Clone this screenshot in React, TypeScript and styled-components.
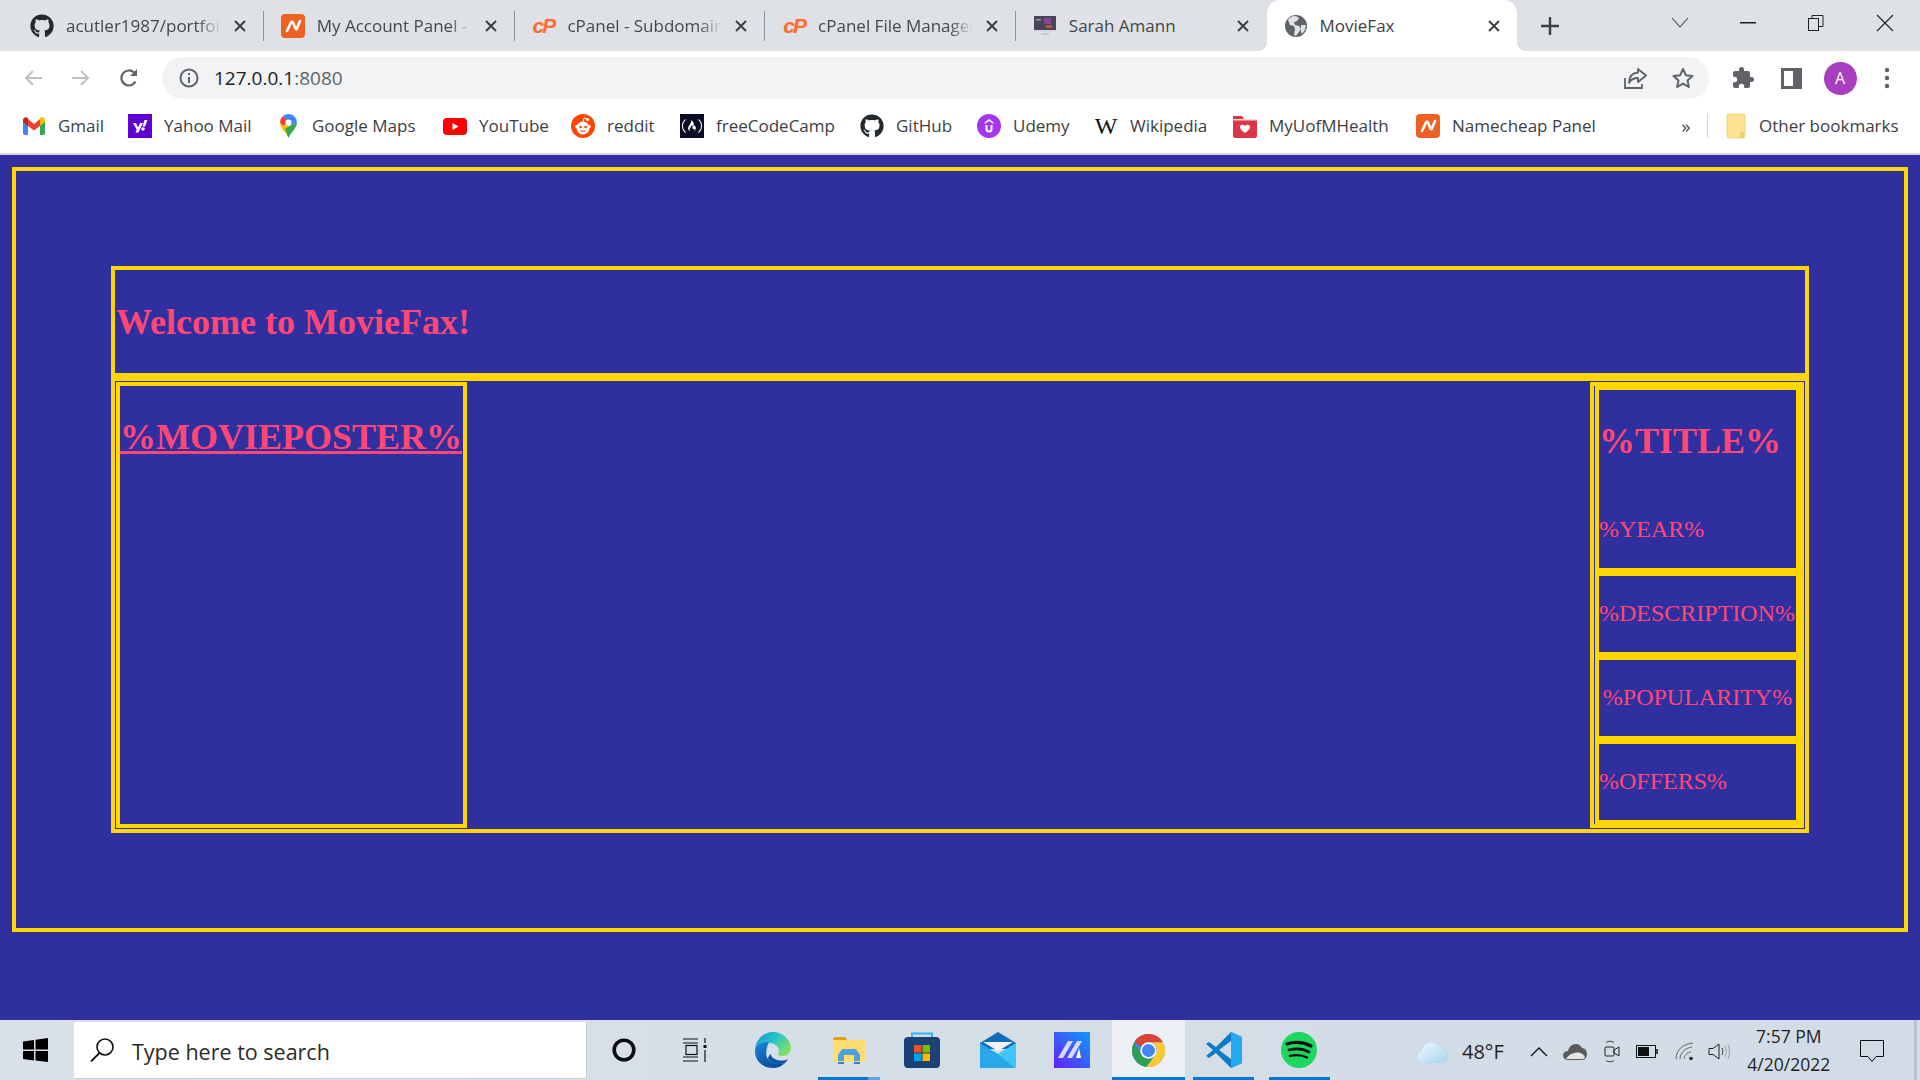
import React from "react";
import styled, { createGlobalStyle } from "styled-components";
import { FaGithub } from "react-icons/fa";
import { SiFreecodecamp } from "react-icons/si";

const UI = `"Open Sans", "Noto Sans", "Liberation Sans", sans-serif`;
const GOLD = "#FFD700";
const PINK = "#FF4775";
const NAVY = "#2F2FA0";

const Global = createGlobalStyle`
  html, body { margin: 0; padding: 0; background: ${NAVY}; }
  * { box-sizing: border-box; }
`;

const Screen = styled.div`
  width: 1920px;
  height: 1080px;
  display: flex;
  flex-direction: column;
  overflow: hidden;
  font-family: ${UI};
`;

/* ---------- browser chrome ---------- */
const TabStrip = styled.div`
  height: 51px;
  flex: none;
  background: #dee1e6;
  display: flex;
  align-items: center;
  padding-left: 13px;
`;
const Tab = styled.div<{ $active?: boolean }>`
  position: relative;
  flex: 0 0 250px;
  min-width: 0;
  align-self: stretch;
  display: flex;
  align-items: center;
  padding: 1px 16px 0 17px;
  background: ${(p) => (p.$active ? "#fff" : "transparent")};
  border-radius: ${(p) => (p.$active ? "13px 13px 0 0" : "0")};
  color: ${(p) => (p.$active ? "#3c4043" : "#45474a")};
  ${(p) =>
    p.$active
      ? `&::before, &::after { content: ""; position: absolute; bottom: 0; width: 10px; height: 10px; }
         &::before { left: -10px; background: radial-gradient(circle at 0 0, transparent 10px, #fff 10.5px); }
         &::after { right: -10px; background: radial-gradient(circle at 100% 0, transparent 10px, #fff 10.5px); }`
      : ""}
`;
const TabIconBox = styled.span`
  flex: 0 0 24px;
  height: 24px;
  display: flex;
  align-items: center;
  justify-content: center;
`;
const TabTitle = styled.span<{ $fade: boolean }>`
  flex: 1;
  min-width: 0;
  margin: 0 12px;
  font-size: 17px;
  line-height: 24px;
  white-space: nowrap;
  overflow: hidden;
  ${(p) =>
    p.$fade
      ? `-webkit-mask-image: linear-gradient(to right, #000 85%, transparent 100%);
         mask-image: linear-gradient(to right, #000 85%, transparent 100%);`
      : ""}
`;
const TabSep = styled.span<{ $hidden: boolean }>`
  flex: 0 0 1px;
  height: 30px;
  margin-right: -0.3px;
  background: ${(p) => (p.$hidden ? "transparent" : "#8f9297")};
`;
const NewTab = styled.span`
  margin-left: 23px;
  display: flex;
`;
const StripRight = styled.div`
  margin-left: auto;
  display: flex;
  align-items: center;
`;
const WinButton = styled.span`
  width: 68px;
  height: 51px;
  display: flex;
  align-items: center;
  justify-content: center;
  padding-bottom: 6px;
  &:last-child { width: 70px; }
`;

const Toolbar = styled.div`
  height: 52px;
  flex: none;
  background: #fff;
  display: flex;
  align-items: center;
  padding: 2px 0 0 9px;
`;
const NavButton = styled.span`
  width: 48px;
  height: 42px;
  display: flex;
  align-items: center;
  justify-content: center;
`;
const Omnibox = styled.div`
  margin-left: 9px;
  width: 1547px;
  height: 42px;
  border-radius: 21px;
  background: #f1f3f4;
  display: flex;
  align-items: center;
  padding-left: 17px;
`;
const Url = styled.span`
  margin-left: 15px;
  font-size: 19px;
  color: #202124;
  flex: 1;
`;
const UrlPort = styled.span`
  color: #5f6368;
`;
const OmniAction = styled.span`
  width: 47px;
  display: flex;
  justify-content: center;
  &:last-child { margin-right: 3px; }
`;
const ToolGroup = styled.div`
  margin-left: 10px;
  display: flex;
  align-items: center;
`;

const BookmarkBar = styled.div`
  height: 52px;
  flex: none;
  background: #fff;
  border-bottom: 2px solid #d6d6d6;
  display: flex;
  align-items: center;
  padding: 0 0 4px 22px;
`;
const Bookmark = styled.div<{ $w: number }>`
  flex: 0 0 ${(p) => p.$w}px;
  display: flex;
  align-items: center;
`;
const BmIcon = styled.span`
  flex: 0 0 24px;
  height: 24px;
  display: flex;
  align-items: center;
  justify-content: center;
`;
const BmText = styled.span`
  margin-left: 12px;
  font-size: 17px;
  line-height: 24px;
  color: #3c4043;
  white-space: nowrap;
`;
const WikiW = styled.span`
  font-family: "Liberation Serif", serif;
  font-size: 24px;
  line-height: 24px;
  color: #111;
`;
const Chevrons = styled.span`
  flex: 0 0 32px;
  text-align: center;
  font-size: 18px;
  line-height: 24px;
  color: #45474a;
`;
const BmDivider = styled.span`
  flex: 0 0 1px;
  height: 24px;
  margin: 0 18px 0 5px;
  background: #d3d4d6;
`;
const OtherText = styled(BmText)`
  margin-left: 13px;
`;

/* ---------- the page ---------- */
const Page = styled.main`
  flex: 1;
  min-height: 0;
  background: ${NAVY};
  padding: 12px;
`;
const Frame = styled.div`
  height: 765px;
  border: 4px solid ${GOLD};
  padding: 95px 95px 0;
  font-family: "Liberation Serif", "Times New Roman", serif;
  color: ${PINK};
`;
const Header = styled.header`
  height: 111px;
  border: 4px solid ${GOLD};
  display: flex;
  align-items: center;
  padding-left: 1px;
`;
const Welcome = styled.h1`
  margin: 0;
  font-size: 36px;
  font-weight: 700;
`;
const Row = styled.section`
  height: 456px;
  border: 4px solid ${GOLD};
  padding: 1px;
  display: flex;
  justify-content: space-between;
`;
const Poster = styled.div`
  width: 351px;
  border: 4px solid ${GOLD};
  padding-top: 30px;
`;
const PosterLink = styled.a`
  display: block;
  font-size: 36px;
  font-weight: 700;
  color: ${PINK};
  text-decoration: underline;
  white-space: nowrap;
`;
const Details = styled.div`
  width: 214px;
  border: 4px solid ${GOLD};
  padding-left: 1px;
  display: flex;
  flex-direction: column;
`;
const TitleBox = styled.div`
  height: 186px;
  border: 4px solid ${GOLD};
  padding-top: 30px;
`;
const MovieTitle = styled.h2`
  margin: 0 0 54px;
  font-size: 36px;
  font-weight: 700;
`;
const FactText = styled.div`
  font-size: 24px;
  white-space: nowrap;
`;
const FactBox = styled.div<{ $center?: boolean }>`
  height: 84px;
  border: 4px solid ${GOLD};
  padding-bottom: 2px;
  display: flex;
  align-items: center;
  justify-content: ${(p) => (p.$center ? "center" : "flex-start")};
`;

/* ---------- taskbar ---------- */
const Taskbar = styled.footer`
  height: 60px;
  flex: none;
  background: linear-gradient(90deg, #d9e0e8, #d2dce6);
  display: flex;
`;
const StartButton = styled.span`
  flex: 0 0 74px;
  display: flex;
  align-items: center;
  justify-content: center;
  padding: 0 3px 0 0;
`;
const SearchBox = styled.div`
  flex: 0 0 512px;
  height: 56px;
  margin-top: 2px;
  background: #fff;
  display: flex;
  align-items: center;
  padding-left: 16px;
  box-shadow: 1px 1px 0 #c9ced4;
`;
const SearchText = styled.span`
  margin: 2px 0 0 17px;
  font-size: 21.5px;
  color: #2a2a2a;
`;
const AppSlot = styled.div<{ $w: number; $on?: boolean }>`
  flex: 0 0 ${(p) => p.$w}px;
  display: flex;
  flex-direction: column;
  align-items: center;
  background: ${(p) => (p.$on ? "#edf0f4" : "transparent")};
`;
const AppIcon = styled.div`
  flex: 1;
  display: flex;
  align-items: center;
  justify-content: center;
  padding-top: 3px;
`;
const Underline = styled.span<{ $w: number; $split?: boolean }>`
  flex: 0 0 3px;
  width: ${(p) => p.$w}px;
  background: ${(p) => (p.$split ? "linear-gradient(90deg,#0078d4 80%,#5ca5e3 80%)" : "#0078d4")};
`;
const NoUnderline = styled.span`
  flex: 0 0 3px;
`;
const TrayItem = styled.div<{ $ml: number }>`
  margin-left: ${(p) => p.$ml}px;
  display: flex;
  align-items: center;
  justify-content: center;
  padding-top: 2px;
`;
const Temp = styled.span`
  font-size: 20px;
  color: #1f1f1f;
`;
const Clock = styled.div`
  margin-left: 17px;
  width: 84px;
  padding-top: 2px;
  display: flex;
  flex-direction: column;
  align-items: center;
  font-size: 17.5px;
  line-height: 28px;
  color: #1f1f1f;
  white-space: nowrap;
`;
const EdgeLine = styled.span`
  flex: 0 0 3px;
  margin-left: 30px;
  background: #b9c2cc;
`;

/* ---------- drawings ---------- */
const S = ({ w, h = w, vb, children }: { w: number; h?: number; vb?: string; children: React.ReactNode }) => (
  <svg width={w} height={h} viewBox={vb ?? `0 0 ${w} ${h}`} fill="none" style={{ display: "block" }}>
    {children}
  </svg>
);
const CloseX = () => (
  <S w={14}><path d="M2 2 12 12M12 2 2 12" stroke="#3c4043" strokeWidth="2" /></S>
);
const Namecheap = ({ w = 24, h = 24 }: { w?: number; h?: number }) => (
  <S w={w} h={h} vb="0 0 24 24">
    <rect width="24" height="24" rx="4" fill="#ED6223" />
    <path d="M6 17 10 8.500c.6-1 1.600-1 2 0l2.500 6c.3 1 1 1 1.400 0L19 7" stroke="#fff" strokeWidth="2.600" strokeLinecap="round" />
  </S>
);
const CPanelMark = styled.span`
  font-family: "Liberation Sans", sans-serif;
  font-style: italic;
  font-weight: 700;
  font-size: 21px;
  letter-spacing: -2px;
  line-height: 24px;
  color: #ff6c2c;
`;
const Monitor = () => (
  <S w={22} h={20}>
    <rect x="0" y="0" width="22" height="14" fill="#4a4458" />
    <rect x="10" y="2" width="7" height="6" fill="#7d4a9e" />
    <rect x="12" y="9" width="6" height="3" fill="#c0553c" />
    <rect x="2" y="3" width="5" height="1.500" fill="#9a96a8" />
    <rect x="0" y="14" width="22" height="2" fill="#d9d9dd" />
    <rect x="7" y="17" width="8" height="2" fill="#c6c6cb" />
  </S>
);
const Globe = () => (
  <S w={22}>
    <circle cx="11" cy="11" r="11" fill="#5f6368" />
    <path d="M9 1c-3 .5-5 2-6 4l2 5 4 1 1 3-1 6 2 1 3-4 2-3-2-3-4-1-1-3 3-1 2-3-2-1.500Z" fill="#dee1e6" />
    <path d="M16 10h5l-1 5-3 4-1-2Z" fill="#dee1e6" />
  </S>
);
const Gmail = () => (
  <S w={22} h={18} vb="0 0 22 18">
    <path d="M0 3v13c0 1 .7 2 2 2h3V8Z" fill="#4285F4" />
    <path d="M22 3v13c0 1-.7 2-2 2h-3V8Z" fill="#34A853" />
    <path d="M5 9V2l6 5 6-5v7l-6 4.500Z" fill="#EA4335" />
    <path d="M0 3c0-2.500 3-3.700 5-2v8L0 5Z" fill="#C5221F" />
    <path d="M22 3c0-2.500-3-3.700-5-2v8l5-4Z" fill="#FBBC04" />
  </S>
);
const Yahoo = () => (
  <S w={24}>
    <rect width="24" height="24" fill="#5F01D1" />
    <path d="M5 9h3l2 4.500L12 9h3l-4.500 9.500H7.500l1.200-3Z" fill="#fff" />
    <path d="M16.500 6h3l-2.500 6.500h-2.500Z" fill="#fff" />
    <circle cx="15" cy="15" r="1.800" fill="#fff" />
  </S>
);
const Maps = () => (
  <S w={17} h={24} vb="0 0 17 24">
    <path d="M14 2a8.500 8.500 0 0 1 3 6.500L11 11 6 6Z" fill="#4285F4" />
    <path d="M3 2A8.500 8.500 0 0 1 8.500 0c2 0 4 .7 5.500 2L8.500 8.500 6 6Z" fill="#4285F4" />
    <path d="M0 8.500A8.500 8.500 0 0 1 3 2l5.500 6.500L3 12Z" fill="#EA4335" />
    <path d="M3 12 8.500 8.500V24C7 19 0 14.500 0 8.500Z" fill="#FBBC04" />
    <path d="M8.500 24 5 15l6-4 6-2.500C17 14.500 10 19 8.500 24Z" fill="#34A853" />
    <circle cx="8.500" cy="8.500" r="3" fill="#fff" />
  </S>
);
const YouTube = () => (
  <S w={24} h={17} vb="0 0 24 17">
    <rect width="24" height="17" rx="4" fill="#FF0000" />
    <path d="M9.500 5v7l6-3.500Z" fill="#fff" />
  </S>
);
const Reddit = () => (
  <S w={24}>
    <circle cx="12" cy="12" r="12" fill="#FF4500" />
    <circle cx="12" cy="14" r="6.500" fill="#fff" />
    <circle cx="6" cy="12.500" r="1.800" fill="#fff" />
    <circle cx="18" cy="12.500" r="1.800" fill="#fff" />
    <circle cx="16.500" cy="5.500" r="1.600" fill="#fff" />
    <path d="M12 8l1-4 3.500 1" stroke="#fff" strokeWidth="1" />
    <circle cx="9.500" cy="13" r="1.300" fill="#FF4500" />
    <circle cx="14.500" cy="13" r="1.300" fill="#FF4500" />
    <path d="M9 16.500c1.500 1.300 4.500 1.300 6 0" stroke="#FF4500" strokeWidth="1" />
  </S>
);
const FreeCode = () => (
  <S w={24}>
    <rect width="24" height="24" fill="#0A0A23" />
    <foreignObject x="2" y="2" width="20" height="20"><SiFreecodecamp size={20} color="#fff" /></foreignObject>
  </S>
);
const Udemy = () => (
  <S w={24}>
    <circle cx="12" cy="12" r="12" fill="#A435F0" />
    <path d="M7.500 8.500 12 5l4.500 3.500v1.500L12 7 7.500 10Z" fill="#fff" />
    <path d="M8.500 11v4a3.500 3.500 0 0 0 7 0v-4h-2v4a1.500 1.500 0 0 1-3 0v-4Z" fill="#fff" />
  </S>
);
const MyU = () => (
  <S w={24}>
    <path d="M0 2h9l2 3h13v17c0 1-1 2-2 2H2c-1 0-2-1-2-2Z" fill="#DC3545" />
    <rect x="0" y="5" width="24" height="1.500" fill="#fff" opacity=".8" />
    <path d="M12 19c-3-2-5-4-5-6 0-2.500 3.500-3 5-1 1.500-2 5-1.500 5 1 0 2-2 4-5 6Z" fill="#fff" />
  </S>
);
const Folder = () => (
  <S w={20} h={26}>
    <rect x="1" y="1" width="18" height="24" rx="2" fill="#FDE293" stroke="#f3d472" />
    <rect x="14" y="19" width="4" height="6" fill="#f3d06a" />
  </S>
);
const Gray = "#5f6368";
const Back = ({ c = "#bdc1c6" }: { c?: string }) => (
  <S w={20}><path d="M19 10H3M10 3l-7 7 7 7" stroke={c} strokeWidth="2" /></S>
);
const Forward = () => (
  <S w={20}><path d="M1 10h16M10 3l7 7-7 7" stroke="#bdc1c6" strokeWidth="2" /></S>
);
const Reload = () => (
  <S w={20}>
    <path d="M16.500 13.500A7.500 7.500 0 1 1 15 4.500" stroke={Gray} strokeWidth="2.200" />
    <path d="M18 1v7h-7Z" fill={Gray} />
  </S>
);
const Info = () => (
  <S w={20}>
    <circle cx="10" cy="10" r="8.500" stroke={Gray} strokeWidth="2" />
    <path d="M10 9v6M10 5v2" stroke={Gray} strokeWidth="2" />
  </S>
);
const Share = () => (
  <S w={23}>
    <path d="M1 11v10h17v-4" stroke={Gray} strokeWidth="1.800" />
    <path d="M14 2l8 6.500-8 6.500v-4c-4 0-7 1-9 5 0-6 3-10 9-10.500Z" stroke={Gray} strokeWidth="1.800" strokeLinejoin="round" />
  </S>
);
const Star = () => (
  <S w={22}>
    <path d="M11 2l2.800 6.200 6.700.7-5 4.500 1.400 6.600L11 16.600 5.100 20l1.400-6.600-5-4.500 6.700-.7Z" stroke={Gray} strokeWidth="2" strokeLinejoin="round" />
  </S>
);
const Puzzle = () => (
  <S w={24} vb="0 0 24 24">
    <path d="M20.500 11H19V7c0-1.100-.9-2-2-2h-4V3.500a2.500 2.500 0 0 0-5 0V5H4c-1.100 0-2 .9-2 2v3.800h1.500a2.700 2.700 0 0 1 0 5.400H2V20c0 1.100.9 2 2 2h3.800v-1.500a2.700 2.700 0 0 1 5.400 0V22H17c1.100 0 2-.9 2-2v-4h1.500a2.500 2.500 0 0 0 0-5Z" fill={Gray} />
  </S>
);
const SidePanel = () => (
  <S w={21}>
    <rect x="1.500" y="1.500" width="18" height="18" stroke={Gray} strokeWidth="3" />
    <rect x="12" y="2" width="7" height="17" fill={Gray} />
  </S>
);
const AvatarCircle = styled.span`
  width: 33px;
  height: 33px;
  border-radius: 50%;
  background: #a83ec0;
  color: #fff;
  font-size: 16px;
  display: flex;
  align-items: center;
  justify-content: center;
`;
const ToolSlot = styled.span<{ $w: number }>`
  flex: 0 0 ${(p) => p.$w}px;
  display: flex;
  justify-content: center;
  align-items: center;
`;
const Kebab = () => (
  <S w={6} h={22}>
    <circle cx="3" cy="3" r="2.200" fill={Gray} /><circle cx="3" cy="11" r="2.200" fill={Gray} /><circle cx="3" cy="19" r="2.200" fill={Gray} />
  </S>
);
const WinLogo = () => (
  <S w={25} h={24}>
    <path d="M0 3.500 11 2v9.500H0ZM12.500 1.800 25 0v11.500H12.500ZM0 13h11v9.500L0 21ZM12.500 13H25v11l-12.500-1.500Z" fill="#000" />
  </S>
);
const Magnifier = () => (
  <S w={25} h={24}>
    <circle cx="15" cy="9" r="8" stroke="#111" strokeWidth="1.600" />
    <path d="M9.500 15 1 23.500" stroke="#111" strokeWidth="1.800" />
  </S>
);
const Cortana = () => (
  <S w={24}><circle cx="12" cy="12" r="9.800" stroke="#0c0c0c" strokeWidth="3.600" /></S>
);
const TaskView = () => (
  <S w={25} h={24}>
    <path d="M0 1h15M0 5h15M0 19h15M0 23h15" stroke="#111" strokeWidth="1.200" />
    <rect x="3" y="7.500" width="11" height="9" stroke="#111" strokeWidth="1.200" />
    <path d="M22 0v5M22 12v12" stroke="#111" strokeWidth="1.200" />
    <rect x="20.500" y="7" width="3" height="3" fill="#111" />
  </S>
);
const Edge = () => (
  <S w={36} vb="0 0 36 36">
    <defs>
      <linearGradient id="eg1" x1="0" y1="0" x2="1" y2="0.6"><stop offset="0" stopColor="#0c8fd8" /><stop offset=".55" stopColor="#2ec6c6" /><stop offset="1" stopColor="#7fe06a" /></linearGradient>
      <linearGradient id="eg2" x1="0" y1="0" x2="0.5" y2="1"><stop offset="0" stopColor="#1c86d8" /><stop offset="1" stopColor="#0a4ea0" /></linearGradient>
    </defs>
    <path d="M0 17C1 7 9 0 18 0c10 0 18 8 18 16 0 5-4 8-8 8-3 0-5-1-5-2 1-1 1-2 1-3 0-4-4-8-10-8C8 11 2 13 0 17Z" fill="url(#eg1)" />
    <path d="M14 10C6 10 0 14 0 19c0 10 8 17 18 17 5 0 9-2 12-5-6 2-14 1-17-4-3-4-2-10 1-17Z" fill="url(#eg2)" />
    <path d="M13 27c4 6 12 6 17 4 1-1 2-2 3-4-4 2-9 2-13 0-3-1-4-3-4-5-2 1-3 3-3 5Z" fill="#0b57a8" />
  </S>
);
const Explorer = () => (
  <S w={32} h={27}>
    <path d="M0 2c0-1 1-2 2-2h10l3 4H0Z" fill="#E0A30F" />
    <rect x="0" y="3" width="32" height="22" rx="1" fill="#FFDC6E" />
    <path d="M5 24v-6l4-6h14l4 6v6h-6v-6h-10v6Z" fill="#4FA0E0" />
    <path d="M5 25v2h6v-2ZM21 25v2h6v-2Z" fill="#3a7fc0" />
  </S>
);
const Store = () => (
  <S w={36}>
    <path d="M8 6V1.500h20V6" stroke="#2FB6EE" strokeWidth="2" />
    <rect x="0" y="5" width="36" height="31" rx="4" fill="#1A4277" />
    <rect x="10" y="13" width="7.500" height="7.500" fill="#F25022" />
    <rect x="18.500" y="13" width="7.500" height="7.500" fill="#7FBA00" />
    <rect x="10" y="21.500" width="7.500" height="7.500" fill="#00A4EF" />
    <rect x="18.500" y="21.500" width="7.500" height="7.500" fill="#FFB900" />
  </S>
);
const Mail = () => (
  <S w={36}>
    <path d="M0 11 18 0l18 11v6H0Z" fill="#0F6CBD" />
    <path d="M3 10h30L18 19Z" fill="#f2f2f2" />
    <path d="M0 11l18 11 18-11v24a1 1 0 0 1-1 1H1a1 1 0 0 1-1-1Z" fill="#28A8EA" />
    <path d="M18 22l18-11v24a1 1 0 0 1-1 1Z" fill="#50D9FF" opacity=".6" />
  </S>
);
const MArk = () => (
  <S w={36}>
    <defs>
      <linearGradient id="mk" x1="0" y1="1" x2="1" y2="0"><stop offset="0" stopColor="#6422f5" /><stop offset="1" stopColor="#0d9bfa" /></linearGradient>
    </defs>
    <rect width="36" height="36" fill="url(#mk)" />
    <path d="M4 26 14 9h5L9 26ZM13 26 23 9h5l-10 17Z" fill="#d9d9ff" />
    <path d="M25 16l2 10h-5Z" fill="#fff" />
  </S>
);
const Chrome = () => (
  <S w={33} vb="0 0 48 48">
    <circle cx="24" cy="24" r="24" fill="#4285F4" />
    <path d="M3.200 12a24 24 0 0 1 41.600 0H24a12 12 0 0 0-10.400 6Z" fill="#DB4437" />
    <path d="M3.200 12A24 24 0 0 0 21 47.800L31 34a12 12 0 0 1-17.400-4Z" fill="#2E9E53" />
    <path d="M44.800 12A24 24 0 0 1 21 47.800L34.400 30A12 12 0 0 0 24 12Z" fill="#FCC934" />
    <circle cx="24" cy="24" r="12" fill="#fff" />
    <circle cx="24" cy="24" r="9.500" fill="#4285F4" />
  </S>
);
const VSCode = () => (
  <S w={37} h={36}>
    <path d="M1 12 4 10l7 5L26 0l11 5v26l-11 5-15-15-7 5-3-2 7-6Z" fill="#0E7CC4" />
    <path d="M26 0l11 5v26l-11 5Z" fill="#23A9F2" />
    <path d="M26 9 14 18l12 9Z" fill="#d2dce6" />
  </S>
);
const Spotify = () => (
  <S w={36}>
    <circle cx="18" cy="18" r="18" fill="#1ED760" />
    <path d="M6 12c8-2.500 16-2 24 2" stroke="#111" strokeWidth="3.200" strokeLinecap="round" />
    <path d="M8 18c7-2 14-1.500 20 2" stroke="#111" strokeWidth="2.800" strokeLinecap="round" />
    <path d="M9 24c6-1.500 12-1 17 1.500" stroke="#111" strokeWidth="2.400" strokeLinecap="round" />
  </S>
);
const WeatherCloud = () => (
  <S w={32} h={23} vb="0 0 32 23">
    <defs>
      <linearGradient id="wc" x1="0" y1="0" x2="1" y2="1"><stop offset="0" stopColor="#f2f9fd" /><stop offset="1" stopColor="#a6d5ee" /></linearGradient>
    </defs>
    <path d="M6 23C2 23 0 20 0 17c0-3 2-5 5-6 1-6 6-10 12-9 4 .5 7 2.500 8 6 4 0 7 3 7 7 0 5-3 8-7 8Z" fill="url(#wc)" stroke="#9fd0ea" strokeWidth=".6" />
  </S>
);
const Caret = () => (
  <S w={18} h={11}><path d="M1 10 9 2l8 8" stroke="#111" strokeWidth="1.300" /></S>
);
const OneDrive = () => (
  <S w={24} h={17}>
    <path d="M5 17C2 17 0 15 0 12.500S2 8 5 8c1-4 4-7 8-7 3 0 5 2 6 4 3 0 5 3 5 6 0 3-2 6-5 6Z" fill="#5b5b5b" />
    <path d="M3 15.500c3-4 7-6 11-6 4 0 7 2 8 5-1 1-2 1.500-3 1.500H5c-1 0-1.500 0-2-.5Z" fill="#e6e6e6" />
  </S>
);
const DeviceCam = () => (
  <S w={16} h={23}>
    <rect x="1" y="7" width="9" height="9" rx="1" stroke="#222" />
    <path d="M10 10l5-3v9l-5-3Z" stroke="#222" />
    <path d="M2 2.500C4 .8 8 .8 10 2.500M2 20.500c2 1.700 6 1.700 8 0" stroke="#444" />
  </S>
);
const Battery = () => (
  <S w={22} h={13}>
    <rect x=".5" y=".5" width="19" height="12" stroke="#111" />
    <rect x="2" y="2" width="11" height="9" fill="#111" />
    <rect x="20" y="4" width="2" height="5" fill="#444" />
  </S>
);
const Wifi = () => (
  <S w={19}>
    <path d="M1 17C1 8 8 2 18 1M5 17c0-6 5-11 12-12M9 17c0-3 3-7 7-7" stroke="#666" strokeWidth="1" />
    <circle cx="16" cy="16.500" r="1.800" fill="#222" />
  </S>
);
const Speaker = () => (
  <S w={22} h={17}>
    <path d="M1 5.500h4L11 1v15l-6-4.500H1Z" stroke="#222" />
    <path d="M14 5c1 2 1 5 0 7" stroke="#333" />
    <path d="M17 3c1.500 3 1.500 8 0 11M20 1.500c2 4 2 10 0 14" stroke="#999" />
  </S>
);
const Notify = () => (
  <S w={24} h={23}>
    <path d="M.5.500h23v16H16l-4 5-4-5H.5Z" stroke="#111" />
  </S>
);

const tabs = [
  { icon: <FaGithub size={24} color="#24292e" />, title: "acutler1987/portfolio-website" },
  { icon: <Namecheap />, title: "My Account Panel - Namecheap" },
  { icon: <CPanelMark>cP</CPanelMark>, title: "cPanel - Subdomains - Web Hosting" },
  { icon: <CPanelMark>cP</CPanelMark>, title: "cPanel File Manager v3 - Hosting" },
  { icon: <Monitor />, title: "Sarah Amann" },
  { icon: <Globe />, title: "MovieFax", active: true },
];

const bookmarks = [
  { w: 106, icon: <Gmail />, label: "Gmail" },
  { w: 148, icon: <Yahoo />, label: "Yahoo Mail" },
  { w: 167, icon: <Maps />, label: "Google Maps" },
  { w: 128, icon: <YouTube />, label: "YouTube" },
  { w: 109, icon: <Reddit />, label: "reddit" },
  { w: 180, icon: <FreeCode />, label: "freeCodeCamp" },
  { w: 117, icon: <FaGithub size={24} color="#24292e" />, label: "GitHub" },
  { w: 117, icon: <Udemy />, label: "Udemy" },
  { w: 139, icon: <WikiW>W</WikiW>, label: "Wikipedia" },
  { w: 183, icon: <MyU />, label: "MyUofMHealth" },
  { w: 254, icon: <Namecheap />, label: "Namecheap Panel" },
];

const apps = [
  { w: 76, icon: <Cortana /> },
  { w: 66, icon: <TaskView /> },
  { w: 90, icon: <Edge /> },
  { w: 62, icon: <Explorer />, line: 62, split: true },
  { w: 84, icon: <Store /> },
  { w: 68, icon: <Mail /> },
  { w: 80, icon: <MArk /> },
  { w: 73, icon: <Chrome />, line: 73, on: true },
  { w: 76, icon: <VSCode />, line: 61 },
  { w: 76, icon: <Spotify />, line: 61 },
];

const tray = [
  { ml: 79, node: <WeatherCloud /> },
  { ml: 14, node: <Temp>48°F</Temp> },
  { ml: 26, node: <Caret /> },
  { ml: 15, node: <OneDrive /> },
  { ml: 17, node: <DeviceCam /> },
  { ml: 16, node: <Battery /> },
  { ml: 17, node: <Wifi /> },
  { ml: 14, node: <Speaker /> },
];

export default function App() {
  return (
    <Screen>
      <Global />
      <TabStrip>
        {tabs.map((t, i) => (
          <React.Fragment key={t.title}>
            <Tab $active={t.active}>
              <TabIconBox>{t.icon}</TabIconBox>
              <TabTitle $fade={!t.active && t.title !== "Sarah Amann"}>{t.title}</TabTitle>
              <CloseX />
            </Tab>
            {i < tabs.length - 1 && <TabSep $hidden={i >= 4} />}
          </React.Fragment>
        ))}
        <NewTab>
          <S w={20}><path d="M10 1v18M1 10h18" stroke="#3c4043" strokeWidth="2.400" /></S>
        </NewTab>
        <StripRight>
          <WinButton><S w={18} h={11}><path d="M1 1l8 9 8-9" stroke="#444" strokeWidth="1.100" /></S></WinButton>
          <WinButton><S w={16} h={2}><rect width="16" height="1.500" fill="#222" /></S></WinButton>
          <WinButton>
            <S w={16}><rect x=".5" y="3.500" width="10" height="12" stroke="#222" /><path d="M4 3V.5h11v11h-4" stroke="#222" /></S>
          </WinButton>
          <WinButton><S w={18}><path d="M1 1l16 16M17 1 1 17" stroke="#222" strokeWidth="1.100" /></S></WinButton>
        </StripRight>
      </TabStrip>

      <Toolbar>
        <NavButton><Back /></NavButton>
        <NavButton><Forward /></NavButton>
        <NavButton><Reload /></NavButton>
        <Omnibox>
          <Info />
          <Url>127.0.0.1<UrlPort>:8080</UrlPort></Url>
          <OmniAction><Share /></OmniAction>
          <OmniAction><Star /></OmniAction>
        </Omnibox>
        <ToolGroup>
          <ToolSlot $w={48}><Puzzle /></ToolSlot>
          <ToolSlot $w={48}><SidePanel /></ToolSlot>
          <ToolSlot $w={50}><AvatarCircle>A</AvatarCircle></ToolSlot>
          <ToolSlot $w={44}><Kebab /></ToolSlot>
        </ToolGroup>
      </Toolbar>

      <BookmarkBar>
        {bookmarks.map((b) => (
          <Bookmark key={b.label} $w={b.w}>
            <BmIcon>{b.icon}</BmIcon>
            <BmText>{b.label}</BmText>
          </Bookmark>
        ))}
        <Chevrons>»</Chevrons>
        <BmDivider />
        <Folder />
        <OtherText>Other bookmarks</OtherText>
      </BookmarkBar>

      <Page>
        <Frame>
          <Header>
            <Welcome>Welcome to MovieFax!</Welcome>
          </Header>
          <Row>
            <Poster>
              <PosterLink href="#">%MOVIEPOSTER%</PosterLink>
            </Poster>
            <Details>
              <TitleBox>
                <MovieTitle>%TITLE%</MovieTitle>
                <FactText>%YEAR%</FactText>
              </TitleBox>
              <FactBox><FactText>%DESCRIPTION%</FactText></FactBox>
              <FactBox $center><FactText>%POPULARITY%</FactText></FactBox>
              <FactBox><FactText>%OFFERS%</FactText></FactBox>
            </Details>
          </Row>
        </Frame>
      </Page>

      <Taskbar>
        <StartButton><WinLogo /></StartButton>
        <SearchBox>
          <Magnifier />
          <SearchText>Type here to search</SearchText>
        </SearchBox>
        {apps.map((a, i) => (
          <AppSlot key={i} $w={a.w} $on={a.on}>
            <AppIcon>{a.icon}</AppIcon>
            {a.line ? <Underline $w={a.line} $split={a.split} /> : <NoUnderline />}
          </AppSlot>
        ))}
        {tray.map((t, i) => (
          <TrayItem key={i} $ml={t.ml}>{t.node}</TrayItem>
        ))}
        <Clock>
          <span>7:57 PM</span>
          <span>4/20/2022</span>
        </Clock>
        <TrayItem $ml={29}><Notify /></TrayItem>
        <EdgeLine />
      </Taskbar>
    </Screen>
  );
}
